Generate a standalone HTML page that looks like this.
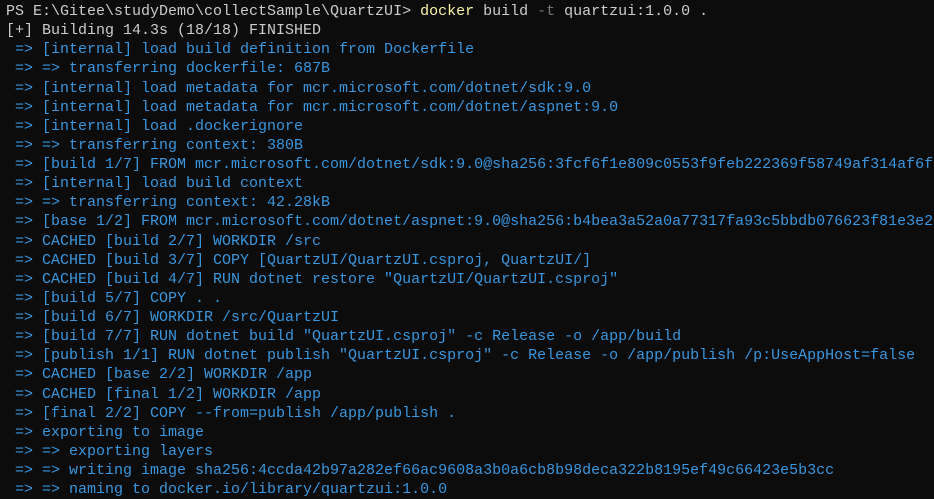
<!DOCTYPE html>
<html><head><meta charset="utf-8"><style>
html,body{margin:0;padding:0;background:#0c0c0c;width:934px;height:499px;overflow:hidden}
pre{margin:0;padding:2px 0 0 6px;font-family:"Liberation Mono",monospace;font-size:15px;line-height:19.12px;color:#cccccc;white-space:pre}
.b{color:#3a96dd}.y{color:#f9f1a5}.g{color:#767676}
</style></head><body><pre>PS E:\Gitee\studyDemo\collectSample\QuartzUI&gt; <span class="y">docker</span> build <span class="g">-t</span> quartzui:1.0.0 .
[+] Building 14.3s (18/18) FINISHED
<span class="b"> =&gt; [internal] load build definition from Dockerfile
 =&gt; =&gt; transferring dockerfile: 687B
 =&gt; [internal] load metadata for mcr.microsoft.com/dotnet/sdk:9.0
 =&gt; [internal] load metadata for mcr.microsoft.com/dotnet/aspnet:9.0
 =&gt; [internal] load .dockerignore
 =&gt; =&gt; transferring context: 380B
 =&gt; [build 1/7] FROM mcr.microsoft.com/dotnet/sdk:9.0@sha256:3fcf6f1e809c0553f9feb222369f58749af314af6f
 =&gt; [internal] load build context
 =&gt; =&gt; transferring context: 42.28kB
 =&gt; [base 1/2] FROM mcr.microsoft.com/dotnet/aspnet:9.0@sha256:b4bea3a52a0a77317fa93c5bbdb076623f81e3e2
 =&gt; CACHED [build 2/7] WORKDIR /src
 =&gt; CACHED [build 3/7] COPY [QuartzUI/QuartzUI.csproj, QuartzUI/]
 =&gt; CACHED [build 4/7] RUN dotnet restore "QuartzUI/QuartzUI.csproj"
 =&gt; [build 5/7] COPY . .
 =&gt; [build 6/7] WORKDIR /src/QuartzUI
 =&gt; [build 7/7] RUN dotnet build "QuartzUI.csproj" -c Release -o /app/build
 =&gt; [publish 1/1] RUN dotnet publish "QuartzUI.csproj" -c Release -o /app/publish /p:UseAppHost=false
 =&gt; CACHED [base 2/2] WORKDIR /app
 =&gt; CACHED [final 1/2] WORKDIR /app
 =&gt; [final 2/2] COPY --from=publish /app/publish .
 =&gt; exporting to image
 =&gt; =&gt; exporting layers
 =&gt; =&gt; writing image sha256:4ccda42b97a282ef66ac9608a3b0a6cb8b98deca322b8195ef49c66423e5b3cc
 =&gt; =&gt; naming to docker.io/library/quartzui:1.0.0</span></pre></body></html>
